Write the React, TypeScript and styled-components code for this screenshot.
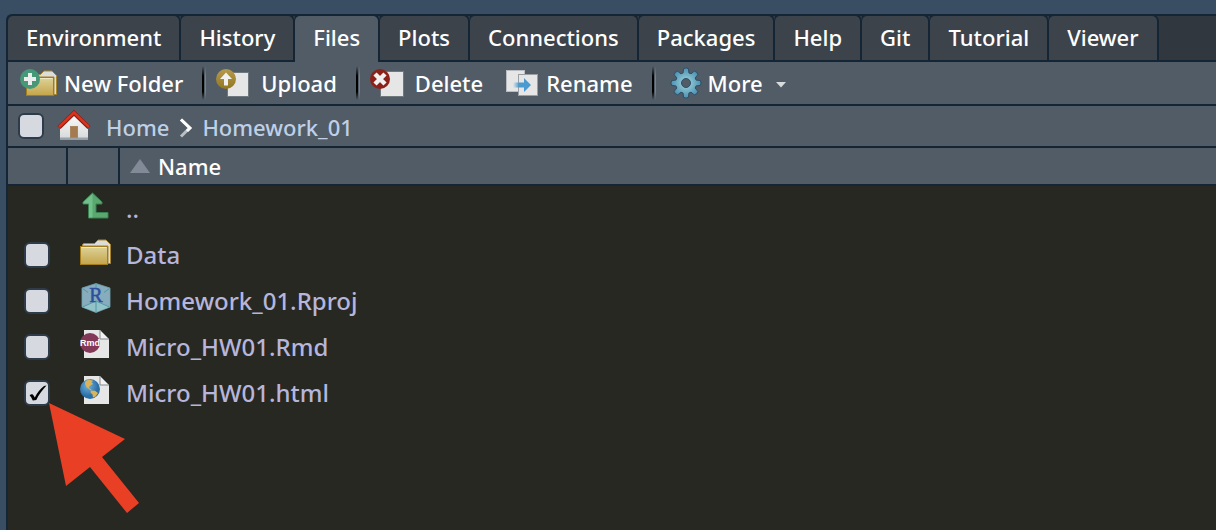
import React, { useState } from "react";
import styled, { createGlobalStyle } from "styled-components";

const line = "#142536";
const bar = "#525c66";

const GlobalStyle = createGlobalStyle`
  * { box-sizing: border-box; }
  body {
    margin: 0;
    background: #394e63;
    font-family: "Noto Sans", "Open Sans", sans-serif;
    font-size: 22px;
    font-weight: 500;
    line-height: 30px;
  }
`;

const Page = styled.div`
  position: relative;
  min-height: 100vh;
  padding: 14px 0 0 6px;
  display: flex;
  overflow: hidden;
`;

const Panel = styled.main`
  flex: 1;
  min-width: 0;
  border: solid ${line};
  border-width: 2px 0 0 2px;
  border-top-left-radius: 6px;
  background: #272822;
  overflow: hidden;
`;

const TabBar = styled.div`
  display: flex;
  height: 46px;
  background: #31373f;
  box-shadow: inset 0 -2px ${line};
`;

const Tab = styled.button<{ $active?: boolean }>`
  flex: none;
  height: ${(p) => (p.$active ? 46 : 44)}px;
  padding: 0 18px ${(p) => (p.$active ? 4 : 2)}px;
  border: 0;
  background: ${(p) => (p.$active ? bar : "#3c434a")};
  border-radius: 5px 5px 0 0;
  box-shadow: 2px 0 ${line}, 0 -4px ${line};
  margin-right: 2px;
  color: #fff;
  font: inherit;
  cursor: pointer;
`;

const Toolbar = styled.div`
  display: flex;
  align-items: center;
  height: 44px;
  padding-left: 12px;
  background: ${bar};
  border-bottom: 2px solid ${line};
`;

const ToolButton = styled.button<{ $gap: number }>`
  display: flex;
  align-items: center;
  gap: ${(p) => p.$gap}px;
  flex: none;
  padding: 0;
  border: 0;
  background: none;
  color: #fff;
  font: inherit;
  cursor: pointer;
  svg { display: block; flex: none; }
`;

const Separator = styled.span<{ $after: number }>`
  flex: none;
  width: 4px;
  height: 34px;
  margin: 0 ${(p) => p.$after}px 0 19px;
  background:
    linear-gradient(transparent, #000 30%, #000 75%, transparent) left / 2px 100% no-repeat,
    linear-gradient(transparent, #77808a 30%, #77808a 75%, transparent) right / 1px 100% no-repeat;
`;

const Gap = styled.span`
  flex: none;
  width: 23px;
`;

const PathBar = styled.nav`
  display: flex;
  align-items: center;
  height: 42px;
  padding-left: 10px;
  background: ${bar};
  border-bottom: 2px solid ${line};
  svg { display: block; flex: none; }
`;

const HomeLink = styled.a`
  margin: 0 15px 0 13px;
`;

const Crumb = styled.a`
  padding-top: 2px;
  color: #bfd0e6;
  text-decoration: none;
`;

const Chevron = styled.svg`
  margin: 0 9px 0 10px;
`;

const CheckLabel = styled.label`
  display: grid;
  width: 26px;
  height: 26px;
  > * { grid-area: 1 / 1; }
  svg { visibility: hidden; pointer-events: none; }
  input:checked + svg { visibility: visible; }
`;

const CheckInput = styled.input`
  appearance: none;
  width: 26px;
  height: 26px;
  margin: 0;
  border: 2px solid #2e3b4b;
  border-radius: 6px;
  background: #d6dae0;
`;

const FileTable = styled.table`
  width: 100%;
  border-collapse: separate;
  border-spacing: 0;
  table-layout: fixed;
`;

const Col = styled.col<{ $w?: number }>`
  width: ${(p) => (p.$w ? p.$w + "px" : "auto")};
`;

const HeadCell = styled.th<{ $last?: boolean }>`
  height: 38px;
  padding: 0 0 0 10px;
  background: ${bar};
  border-bottom: 2px solid ${line};
  border-right: ${(p) => (p.$last ? "0" : `2px solid ${line}`)};
  text-align: left;
  font-weight: 500;
  color: #fff;
`;

const SortButton = styled.button`
  display: flex;
  align-items: center;
  gap: 8px;
  padding: 0;
  border: 0;
  background: none;
  color: inherit;
  font: inherit;
`;

const Cell = styled.td<{ $left: number; $lift?: number }>`
  height: 46px;
  padding: 0 0 ${(p) => p.$lift ?? 0}px ${(p) => p.$left}px;
  vertical-align: middle;
  svg { display: block; }
`;

const FileLink = styled.a`
  display: block;
  color: #b6b5dc;
  font-size: 24px;
  line-height: 32px;
  text-decoration: none;
`;

const Pointer = styled.svg`
  position: absolute;
  left: 49px;
  top: 403px;
  pointer-events: none;
`;

function Check({ label, on }: { label: string; on?: boolean }) {
  const [checked, setChecked] = useState(!!on);
  return (
    <CheckLabel>
      <CheckInput type="checkbox" aria-label={label} checked={checked} onChange={(e) => setChecked(e.target.checked)} />
      <svg width="26" height="26" viewBox="0 0 26 26">
        <path d="M5.600 15.500C7 13.800 8.800 14 9.600 15.600L10.800 17.600C13 13 16 9 20 6L22.500 5.600C18.300 10 14.800 14.800 12.300 20L8.800 20.600C8 18.600 7 16.800 5.600 15.500Z" fill="#000" />
      </svg>
    </CheckLabel>
  );
}

function FolderShape() {
  return (
    <>
      <path d="M2.500 5.500 4 4.500H14.500L18 1H26L30.500 5.500V24.500H28V7H2.500Z" fill="#dcdcda" stroke="#a8852c" />
      <rect x=".5" y="7.500" width="27" height="18" fill="url(#folder)" stroke="#a37c1c" />
      <path d="M1.500 8.500H26.500" stroke="#efe7bd" />
    </>
  );
}

function Defs() {
  return (
    <svg width="0" height="0" aria-hidden="true" display="block">
      <defs>
        <linearGradient id="folder" x2="0" y2="1"><stop stopColor="#ddd39a" /><stop offset="1" stopColor="#c4a449" /></linearGradient>
        <linearGradient id="gold" x2="0" y2="1"><stop stopColor="#b59a4c" /><stop offset="1" stopColor="#947722" /></linearGradient>
        <linearGradient id="slide"><stop stopColor="#4b9bd0" stopOpacity="0" /><stop offset=".35" stopColor="#4b9bd0" /></linearGradient>
        <radialGradient id="gear"><stop stopColor="#a5d9df" /><stop offset="1" stopColor="#4b8fb2" /></radialGradient>
        <linearGradient id="wall" x2="0" y2="1"><stop stopColor="#fbfbfb" /><stop offset="1" stopColor="#d5d8da" /></linearGradient>
        <radialGradient id="globe" cx=".4" cy=".35"><stop stopColor="#6db2df" /><stop offset="1" stopColor="#2b6fa8" /></radialGradient>
      </defs>
    </svg>
  );
}

const NewFolderIcon = () => (
  <svg width="38" height="28" viewBox="0 0 38 28">
    <g transform="translate(6 1)"><FolderShape /></g>
    <circle cx="10" cy="10" r="10" fill="#479878" />
    <path d="M8 4h4v4h4v4h-4v4H8v-4H4V8h4Z" fill="#ececec" />
  </svg>
);

const UploadIcon = () => (
  <svg width="33" height="28" viewBox="0 0 33 28">
    <rect x="11.500" y="3.500" width="21" height="24" fill="#e6e6e6" stroke="#70787f" />
    <circle cx="10" cy="10" r="10" fill="url(#gold)" />
    <path d="M10 3.500 16 10h-4v6.500H8V10H4Z" fill="#f0f0ee" />
  </svg>
);

const DeleteIcon = () => (
  <svg width="35" height="28" viewBox="0 0 35 28">
    <rect x="10.500" y="2.500" width="23" height="25" fill="#e6e6e6" stroke="#70787f" />
    <circle cx="10" cy="10" r="10" fill="#8c2119" />
    <path d="M5 5 15 15M15 5 5 15" stroke="#f0f0f0" strokeWidth="4.500" />
  </svg>
);

const RenameIcon = () => (
  <svg width="32" height="26" viewBox="0 0 32 26">
    <rect x=".5" y=".5" width="18" height="21" fill="#e6e6e6" stroke="#b9bdc1" />
    <rect x="12.500" y="4.500" width="19" height="21" fill="#e6e6e6" stroke="#9a9fa4" />
    <path d="M7 12.500h11V8l7 7-7 7v-4.500H7Z" fill="url(#slide)" />
  </svg>
);

const gearPath = Array.from({ length: 8 }, (_, i) => {
  const at = (r: number, d: number) => {
    const a = ((i * 45 + d - 90) * Math.PI) / 180;
    return `${(16 + r * Math.cos(a)).toFixed(2)} ${(16 + r * Math.sin(a)).toFixed(2)}`;
  };
  return `${i ? "L" : "M"}${at(10.5, -16)}L${at(14.5, -10)}Q${at(16, 0)} ${at(14.5, 10)}L${at(10.5, 16)}`;
}).join("") + "ZM20.500 16a4.500 4.500 0 1 0-9 0a4.500 4.500 0 1 0 9 0Z";

const GearIcon = () => (
  <svg width="32" height="32" viewBox="0 0 32 32">
    <path d={gearPath} fill="url(#gear)" fillRule="evenodd" stroke="#2c4f66" strokeWidth="1" strokeLinejoin="round" />
  </svg>
);

const HomeIcon = () => (
  <svg width="34" height="32" viewBox="0 0 34 32">
    <path d="M3 16 17 4 31 16V29.500H3Z" fill="url(#wall)" />
    <path d="M3 28.500H31" stroke="#98a2a8" strokeWidth="2" />
    <rect x="13.500" y="16.500" width="7" height="11" fill="#a47a50" stroke="#a98560" />
    <path d="M2 17.500 17 3 32 17.500" fill="none" stroke="#8b1f13" strokeWidth="4.500" />
    <path d="M2 17 17 2.500 32 17" fill="none" stroke="#d9341f" strokeWidth="2.500" />
  </svg>
);

const UpIcon = () => (
  <svg width="30" height="28" viewBox="-2 0 30 28">
    <path d="M10.500 1 20 10v2h-6v8.500h12V26H6.500V12H1v-2Z" fill="#5aa770" stroke="#388250" />
    <path d="M10.500 1.700V25.500H7V11.500H1.500V10.200Z" fill="#71bf8b" />
  </svg>
);

const FolderIcon = () => <svg width="31" height="28" viewBox="0 -1 31 28"><FolderShape /></svg>;

const ProjectIcon = () => (
  <svg width="31" height="30" viewBox="-1 0 31 30">
    <path d="M15 0.500 29 5V24L15 29.500 1 24V5Z" fill="#87acbd" stroke="#6fa3b2" strokeWidth=".8" />
    <path d="M15 18 28.500 24 15 29 1.500 24Z" fill="#93c3c8" />
    <path d="M15 18V29M1.500 24 15 18 28.500 24M15 1V5M1.500 5.500 7 9.500M28.500 5.500 23 9.500" fill="none" stroke="#4f9aa4" strokeWidth="1" />
    <text x="15" y="19" textAnchor="middle" fontFamily="Liberation Serif, serif" fontSize="20" fill="#2f4f9c" stroke="#2f4f9c" strokeWidth=".5">R</text>
  </svg>
);

const Sheet = () => (
  <>
    <path d="M4 0H20L29 9V28H4Z" fill="#e6e6e6" />
    <path d="M20 0V9H29Z" fill="#f2f2f2" stroke="#85898a" />
  </>
);

const RmdIcon = () => (
  <svg width="30" height="28" viewBox="0 0 30 28">
    <Sheet />
    <circle cx="10" cy="13" r="10" fill="#843858" />
    <text x="10" y="16" textAnchor="middle" fontFamily="Liberation Sans, sans-serif" fontSize="9" fontWeight="700" fill="#fff">Rmd</text>
  </svg>
);

const HtmlIcon = () => (
  <svg width="30" height="28" viewBox="0 0 30 28">
    <Sheet />
    <circle cx="10" cy="13" r="10" fill="url(#globe)" />
    <path d="M5.500 5 9 3.500 13.500 5 11.500 6 13 8 9.500 10 8.800 12 11.500 13.500 10.800 14.500 6.500 11 5 8Z" fill="#dbb458" />
    <path d="M10.800 14.500 15 14.800 18 17 15.500 20.500 13 21.500 12.500 18.500 10.500 16.500Z" fill="#dbb458" />
  </svg>
);

const tabs = ["Environment", "History", "Files", "Plots", "Connections", "Packages", "Help", "Git", "Tutorial", "Viewer"];

const files = [
  { name: "..", icon: <UpIcon /> },
  { name: "Data", icon: <FolderIcon />, box: true },
  { name: "Homework_01.Rproj", icon: <ProjectIcon />, box: true },
  { name: "Micro_HW01.Rmd", icon: <RmdIcon />, box: true },
  { name: "Micro_HW01.html", icon: <HtmlIcon />, box: true, on: true },
];

export default function App() {
  return (
    <Page>
      <GlobalStyle />
      <Panel>
        <Defs />
        <TabBar role="tablist">
          {tabs.map((t) => (
            <Tab key={t} role="tab" aria-selected={t === "Files"} $active={t === "Files"}>{t}</Tab>
          ))}
        </TabBar>
        <Toolbar role="toolbar">
          <ToolButton $gap={6}><NewFolderIcon />New Folder</ToolButton>
          <Separator $after={10} />
          <ToolButton $gap={12}><UploadIcon />Upload</ToolButton>
          <Separator $after={10} />
          <ToolButton $gap={10}><DeleteIcon />Delete</ToolButton>
          <Gap />
          <ToolButton $gap={8}><RenameIcon />Rename</ToolButton>
          <Separator $after={14} />
          <ToolButton $gap={6} aria-haspopup="menu">
            <GearIcon />More
            <svg width="18" height="10" viewBox="0 -4 18 10"><path d="M7 0H17L12 5.500Z" fill="#d9dbdd" /></svg>
          </ToolButton>
        </Toolbar>
        <PathBar aria-label="Path">
          <Check label="Select all" />
          <HomeLink href="#" aria-label="Home directory"><HomeIcon /></HomeLink>
          <Crumb href="#">Home</Crumb>
          <Chevron width="14" height="24" viewBox="0 -4 14 24">
            <path d="M2 1.500 10.500 10 2 18.500" fill="none" stroke="#b9bfc5" strokeWidth="3" />
            <path d="M2 1.500 11 10 8 13" fill="none" stroke="#fff" strokeWidth="3" />
          </Chevron>
          <Crumb href="#">Homework_01</Crumb>
        </PathBar>
        <FileTable>
          <colgroup><Col $w={60} /><Col $w={52} /><Col /></colgroup>
          <thead>
            <tr>
              <HeadCell />
              <HeadCell />
              <HeadCell $last>
                <SortButton>
                  <svg width="20" height="14" viewBox="0 0 20 14"><path d="M10 0 20 14H0Z" fill="#828a97" /></svg>
                  Name
                </SortButton>
              </HeadCell>
            </tr>
          </thead>
          <tbody>
            {files.map((f) => (
              <tr key={f.name}>
                <Cell $left={16} $lift={1}>{f.box && <Check label={`Select ${f.name}`} on={f.on} />}</Cell>
                <Cell $left={12} $lift={6}>{f.icon}</Cell>
                <Cell $left={6} $lift={1}><FileLink href="#">{f.name}</FileLink></Cell>
              </tr>
            ))}
          </tbody>
        </FileTable>
      </Panel>
      <Pointer width="90" height="111" viewBox="0 0 90 111" aria-hidden="true">
        <path d="M0 0 76 36 53 54 90 100 78 110 41 64 17 83Z" fill="#e93f25" />
      </Pointer>
    </Page>
  );
}
